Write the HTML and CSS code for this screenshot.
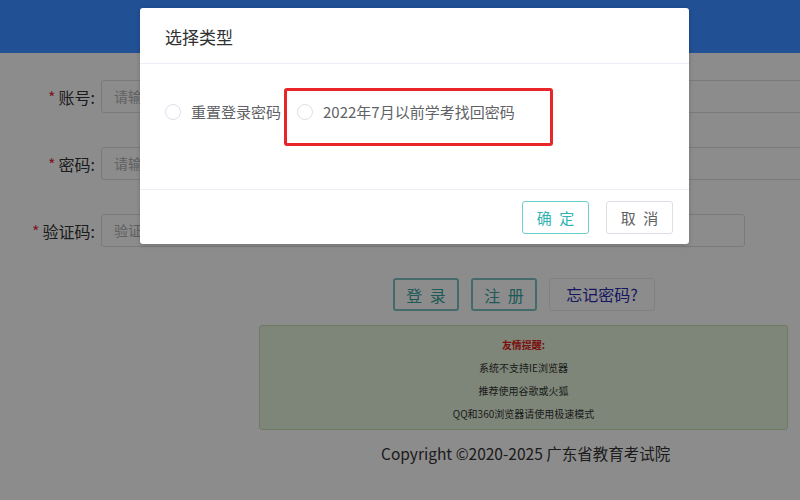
FILE: index.html
```html
<!DOCTYPE html>
<html lang="zh">
<head>
<meta charset="utf-8">
<title>选择类型</title>
<link rel="stylesheet" href="styles.css">
</head>
<body>
<div class="page">
  <header class="topbar"></header>
  <main class="form">
    <div class="row">
      <label class="label"><span class="star">*</span>账号:</label>
      <div class="input wide">请输入账号</div>
    </div>
    <div class="row">
      <label class="label"><span class="star">*</span>密码:</label>
      <div class="input wide">请输入密码</div>
    </div>
    <div class="row">
      <label class="label"><span class="star">*</span>验证码:</label>
      <div class="input code">验证码</div>
    </div>
    <div class="actions">
      <button class="btn teal">登 录</button>
      <button class="btn teal">注 册</button>
      <button class="btn forgot">忘记密码?</button>
    </div>
    <div class="tips">
      <p class="tip-title">友情提醒:</p>
      <p>系统不支持IE浏览器</p>
      <p>推荐使用谷歌或火狐</p>
      <p>QQ和360浏览器请使用极速模式</p>
    </div>
    <footer class="copyright">Copyright ©2020-2025 广东省教育考试院</footer>
  </main>
</div>
<div class="mask"></div>
<div class="dialog">
  <div class="dlg-head">选择类型</div>
  <div class="dlg-body">
    <label class="radio"><span class="dot"></span><span class="rtext">重置登录密码</span></label>
    <label class="radio"><span class="dot"></span><span class="rtext">2022年7月以前学考找回密码</span></label>
  </div>
  <div class="dlg-foot">
    <button class="dbtn ok">确 定</button>
    <button class="dbtn cancel">取 消</button>
  </div>
  <div class="highlight"></div>
</div>
</body>
</html>
```
FILE: styles.css
```css
html, body {
  margin: 0;
  padding: 0;
}
body {
  width: 800px;
  height: 500px;
  overflow: hidden;
  background: #fff;
  font-family: "Noto Sans CJK SC", "Noto Sans", sans-serif;
  color: #333;
  position: relative;
}
.page {
  width: 800px;
  height: 500px;
  display: flex;
  flex-direction: column;
}
.topbar {
  height: 53px;
  background: #215095;
  flex: none;
  position: relative;
  z-index: 2;
}
.form {
  display: flex;
  flex-direction: column;
  padding-top: 27px;
}
.row {
  display: flex;
  align-items: center;
  height: 33px;
  margin-bottom: 34px;
}
.label {
  width: 95px;
  flex: none;
  text-align: right;
  font-size: 16px;
  color: #333;
  margin-right: 6px;
  white-space: nowrap;
}
.star {
  color: #e0304a;
  margin-right: 3px;
}
.input {
  height: 31px;
  border: 1px solid #dcdfe6;
  border-radius: 3px;
  box-sizing: content-box;
  font-size: 14px;
  line-height: 31px;
  color: #b0b0b0;
  padding-left: 12px;
  flex: none;
}
.input.wide { width: 720px; }
.input.code { width: 630px; }
.actions {
  display: flex;
  gap: 12px;
  margin-left: 393px;
  margin-top: -3px;
}
.btn {
  height: 33px;
  box-sizing: border-box;
  border-radius: 3px;
  background: #fff;
  font-family: inherit;
  font-size: 16px;
  padding: 0;
  line-height: 31px;
}
.btn.teal {
  width: 66px;
  border: 2px solid #7cc4c0;
  color: #3aa5a0;
  letter-spacing: 2px;
  text-indent: 2px;
}
.btn.forgot {
  width: 106px;
  border: 1px solid #ececec;
  color: #2b2bb0;
}
.tips {
  margin: 14px 0 0 259px;
  width: 529px;
  height: 105px;
  box-sizing: border-box;
  background: #e6f5dc;
  border: 1px solid #c5e0b3;
  border-radius: 3px;
  padding-top: 11px;
  text-align: center;
  font-size: 10px;
  color: #333;
}
.tips p {
  margin: 0;
  height: 23px;
  line-height: 16px;
}
.tips .tip-title {
  color: #e02020;
  font-weight: bold;
}
.copyright {
  margin: 12px 0 0 381px;
  font-size: 15.5px;
  color: #333;
  white-space: nowrap;
}
.mask {
  position: absolute;
  inset: 0;
  background: rgba(0, 0, 0, 0.45);
}
.dialog {
  position: absolute;
  left: 140px;
  top: 8px;
  width: 549px;
  height: 236px;
  background: #fff;
  border-radius: 3px;
  display: flex;
  flex-direction: column;
  box-shadow: 0 1px 4px rgba(0, 0, 0, 0.2);
  z-index: 3;
}
.dlg-head {
  height: 56px;
  box-sizing: border-box;
  border-bottom: 1px solid #ebeef5;
  padding-left: 25px;
  line-height: 57px;
  font-size: 17px;
  color: #303133;
}
.dlg-body {
  height: 126px;
  box-sizing: border-box;
  border-bottom: 1px solid #ebeef5;
  display: flex;
  align-items: flex-start;
  padding: 39px 0 0 25px;
  gap: 16px;
}
.radio {
  display: flex;
  align-items: center;
  gap: 10px;
  font-size: 15px;
  color: #606266;
  white-space: nowrap;
}
.dot {
  width: 16px;
  height: 16px;
  box-sizing: border-box;
  border: 1px solid #dcdfe6;
  border-radius: 50%;
  flex: none;
}
.rtext {
  line-height: 18px;
}
.dlg-foot {
  flex: 1;
  display: flex;
  justify-content: flex-end;
  align-items: center;
  gap: 17px;
  padding-right: 16px;
}
.dbtn {
  width: 67px;
  height: 33px;
  box-sizing: border-box;
  border-radius: 3px;
  background: #fff;
  font-family: inherit;
  font-size: 15px;
  padding: 0;
  letter-spacing: 2px;
  text-indent: 2px;
}
.dbtn.ok {
  border: 1px solid #6fcfcf;
  color: #2fb2b2;
}
.dbtn.cancel {
  border: 1px solid #dcdfe6;
  color: #606266;
}
.highlight {
  position: absolute;
  left: 144px;
  top: 80px;
  width: 269px;
  height: 58px;
  box-sizing: border-box;
  border: 3px solid #e8262a;
  border-radius: 3px;
}
```
